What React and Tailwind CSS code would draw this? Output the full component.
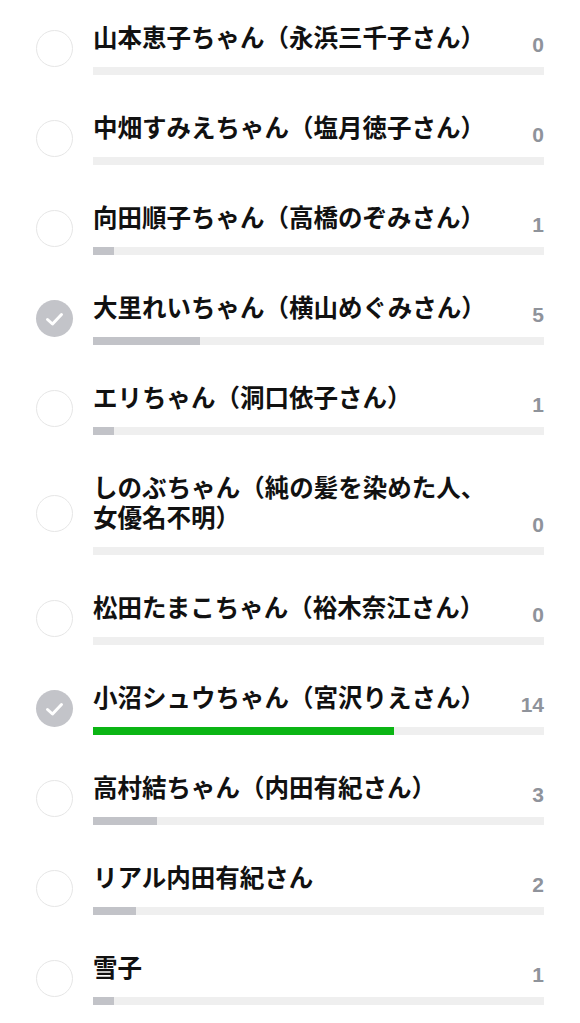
import React from 'react';

// vote list, one row per candidate
const ITEMS = [
  { name: '山本恵子ちゃん（永浜三千子さん）', votes: 0, checked: false },
  { name: '中畑すみえちゃん（塩月徳子さん）', votes: 0, checked: false },
  { name: '向田順子ちゃん（高橋のぞみさん）', votes: 1, checked: false },
  { name: '大里れいちゃん（横山めぐみさん）', votes: 5, checked: true },
  { name: 'エリちゃん（洞口依子さん）', votes: 1, checked: false },
  { name: 'しのぶちゃん（純の髪を染めた人、女優名不明）', votes: 0, checked: false },
  { name: '松田たまこちゃん（裕木奈江さん）', votes: 0, checked: false },
  { name: '小沼シュウちゃん（宮沢りえさん）', votes: 14, checked: true },
  { name: '高村結ちゃん（内田有紀さん）', votes: 3, checked: false },
  { name: 'リアル内田有紀さん', votes: 2, checked: false },
  { name: '雪子', votes: 1, checked: false },
];

const MAX_SCALE = 21;
const TOP = Math.max(...ITEMS.map(i => i.votes));

const CheckCircle = ({ checked }) => {
  if (!checked) {
    return <div className="w-[37px] h-[37px] shrink-0 rounded-full border border-[#e6e6e6] bg-white" />;
  }
  return <div className="w-[37px] h-[37px] shrink-0 rounded-full bg-[#c3c4c9] flex items-center justify-center">
      <svg width="37" height="37" viewBox="0 0 37 37" fill="none">
        <path d="M11.5 19.5L16.5 24L25.5 14.5" stroke="white" strokeWidth="3" strokeLinecap="round" strokeLinejoin="round" />
      </svg>
    </div>;
};

const Row = ({ item }) => {
  const pct = item.votes / MAX_SCALE * 100;
  const isTop = item.votes === TOP && item.votes > 0;
  return <div className="flex items-center pl-[36px] pr-[36px] pt-[19px] pb-[18px]">
      <CheckCircle checked={item.checked} />
      <div className="flex-1 ml-[20px]">
        <div className="flex items-end">
          <div className="flex-1 text-[24.5px] leading-[30px] font-bold text-[#111111]">
            {item.name}
          </div>
          <div className="w-[50px] shrink-0 text-right text-[21px] leading-[20px] font-bold text-[#8f939b] translate-y-[3px] font-['Liberation_Sans',sans-serif]">
            {item.votes}
          </div>
        </div>
        <div className="mt-[15px] h-[8px] bg-[#efefef]">
          <div className={`h-full ${isTop ? 'bg-[#0bb514]' : 'bg-[#c2c3c8]'}`} style={{ width: `${pct}%` }} />
        </div>
      </div>
    </div>;
};

const App = () => {
  return <div className="w-[580px] min-h-[1023px] bg-white pt-[3px] font-['Noto_Sans_CJK_JP','Noto_Sans',sans-serif]">
      {ITEMS.map((item, i) => <Row key={i} item={item} />)}
    </div>;
};

export default App;
